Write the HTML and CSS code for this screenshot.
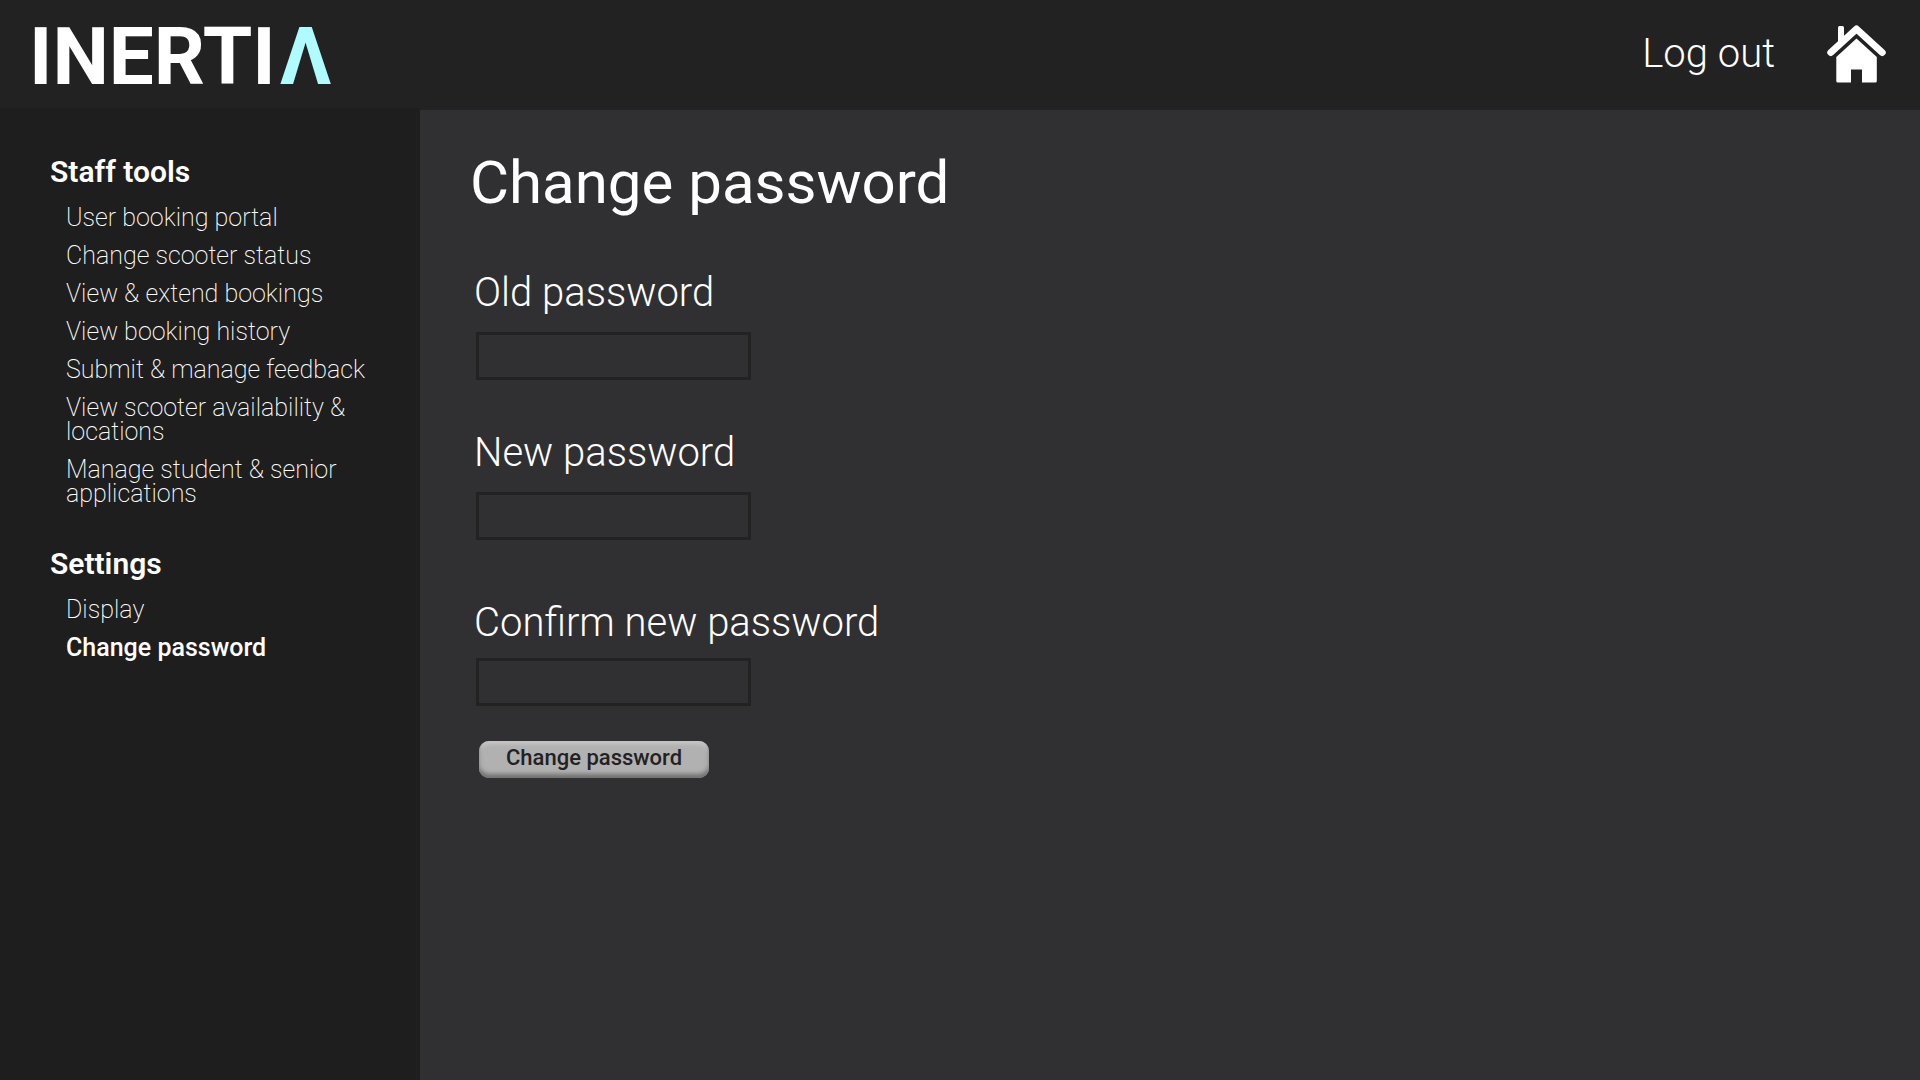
FILE: index.html
```html
<!DOCTYPE html>
<html lang="en">
<head>
<meta charset="utf-8">
<meta name="viewport" content="width=device-width, initial-scale=1">
<title>Inertia – Change password</title>
<link rel="stylesheet" href="styles.css">
</head>
<body>
<header class="topbar">
  <a class="logo" href="#">INERTI<span class="logo-accent">Λ</span></a>
  <nav class="topbar-nav">
    <a class="logout" href="#">Log out</a>
    <a class="home" href="#" aria-label="Home">
      <svg class="home-icon" viewBox="0 0 60 60" aria-hidden="true">
        <path d="M11 21V3.500Q11 2 12.500 2H15.500Q17 2 17 3.500V16Z" fill="currentColor"/>
        <path d="M3.800 28.500L29.500 5L55.200 28.500" fill="none" stroke="currentColor" stroke-width="7" stroke-linecap="round" stroke-linejoin="round"/>
        <path d="M29.500 14.500L49.800 33V57Q49.800 58.500 48.300 58.500H35V45.500H24V58.500H10.800Q9.300 58.500 9.300 57V33Z" fill="currentColor"/>
      </svg>
    </a>
  </nav>
</header>
<div class="layout">
  <nav class="sidebar">
    <section class="menu">
      <h2 class="menu-title">Staff tools</h2>
      <ul class="menu-list">
        <li><a href="#">User booking portal</a></li>
        <li><a href="#">Change scooter status</a></li>
        <li><a href="#">View &amp; extend bookings</a></li>
        <li><a href="#">View booking history</a></li>
        <li><a href="#">Submit &amp; manage feedback</a></li>
        <li><a href="#">View scooter availability &amp; locations</a></li>
        <li><a href="#">Manage student &amp; senior applications</a></li>
      </ul>
    </section>
    <section class="menu">
      <h2 class="menu-title">Settings</h2>
      <ul class="menu-list">
        <li><a href="#">Display</a></li>
        <li><a class="current" href="#" aria-current="page">Change password</a></li>
      </ul>
    </section>
  </nav>
  <main class="content">
    <h1 class="page-title">Change password</h1>
    <form class="password-form">
      <div class="field">
        <label for="old-password">Old password</label>
        <input id="old-password" type="password">
      </div>
      <div class="field">
        <label for="new-password">New password</label>
        <input id="new-password" type="password">
      </div>
      <div class="field field-confirm">
        <label for="confirm-password">Confirm new password</label>
        <input id="confirm-password" type="password">
      </div>
      <button class="submit" type="button">Change password</button>
    </form>
  </main>
</div>
</body>
</html>
```
FILE: styles.css
```css
* {
  box-sizing: border-box;
}

body {
  display: flex;
  flex-direction: column;
  min-height: 100vh;
  margin: 0;
  background: #303032;
  color: #fff;
  font-family: Roboto, "Liberation Sans", sans-serif;
}

a {
  color: inherit;
  text-decoration: none;
}

.topbar {
  display: flex;
  align-items: center;
  justify-content: space-between;
  height: 108px;
  padding: 0 33px 0 29px;
  background: #222;
  box-shadow: 0 2px #222;
}

.logo {
  padding-top: 6px;
  font-size: 80px;
  font-weight: 700;
  line-height: 100px;
}

.logo-accent {
  margin-left: 4px;
  color: #b0fbff;
}

.topbar-nav {
  display: flex;
  align-items: center;
  gap: 52px;
}

.logout {
  font-size: 40px;
  font-weight: 300;
  line-height: 48px;
}

.home {
  display: flex;
}

.home-icon {
  width: 60px;
  height: 60px;
}

.layout {
  display: flex;
  flex: 1;
}

.sidebar {
  position: relative;
  display: flex;
  flex: none;
  flex-direction: column;
  gap: 40px;
  width: 420px;
  padding: 46px 40px 40px 50px;
  background: #1e1e1e;
}

.menu-title {
  margin: 0 0 16px;
  font-size: 30px;
  font-weight: 600;
  line-height: 36px;
}

.menu-list {
  display: flex;
  flex-direction: column;
  gap: 14px;
  margin: 0;
  padding: 0 0 0 16px;
  list-style: none;
  font-size: 25px;
  font-weight: 200;
  line-height: 24px;
}

.menu-list a {
  display: block;
}

.menu-list .current {
  font-weight: 500;
}

.content {
  flex: 1;
  padding: 40px 50px;
}

.page-title {
  margin: 0 0 50px;
  font-size: 60px;
  font-weight: 400;
  line-height: 70px;
}

.password-form {
  display: flex;
  flex-direction: column;
  align-items: flex-start;
  gap: 48px;
  padding-left: 4px;
}

.field {
  display: flex;
  flex-direction: column;
  align-items: flex-start;
  gap: 14px;
}

.field-confirm {
  gap: 10px;
  margin-top: 10px;
}

.field label {
  font-size: 40px;
  font-weight: 300;
  line-height: 50px;
}

.field input {
  width: 275px;
  height: 48px;
  margin: 0 0 0 2px;
  padding: 0 12px;
  border: 3px solid #222;
  border-radius: 0;
  background: transparent;
  color: #fff;
  font: 300 25px Roboto, "Liberation Sans", sans-serif;
}

.submit {
  margin: -13px 0 0 5px;
  padding: 0 27px 4px;
  border: 0;
  border-radius: 10px;
  background: #b1b1b1;
  box-shadow: inset 0 -4px 4px #717171, inset 0 3px 4px #c8c8c8;
  color: #222;
  font: 500 22px/33px Roboto, "Liberation Sans", sans-serif;
}
```
